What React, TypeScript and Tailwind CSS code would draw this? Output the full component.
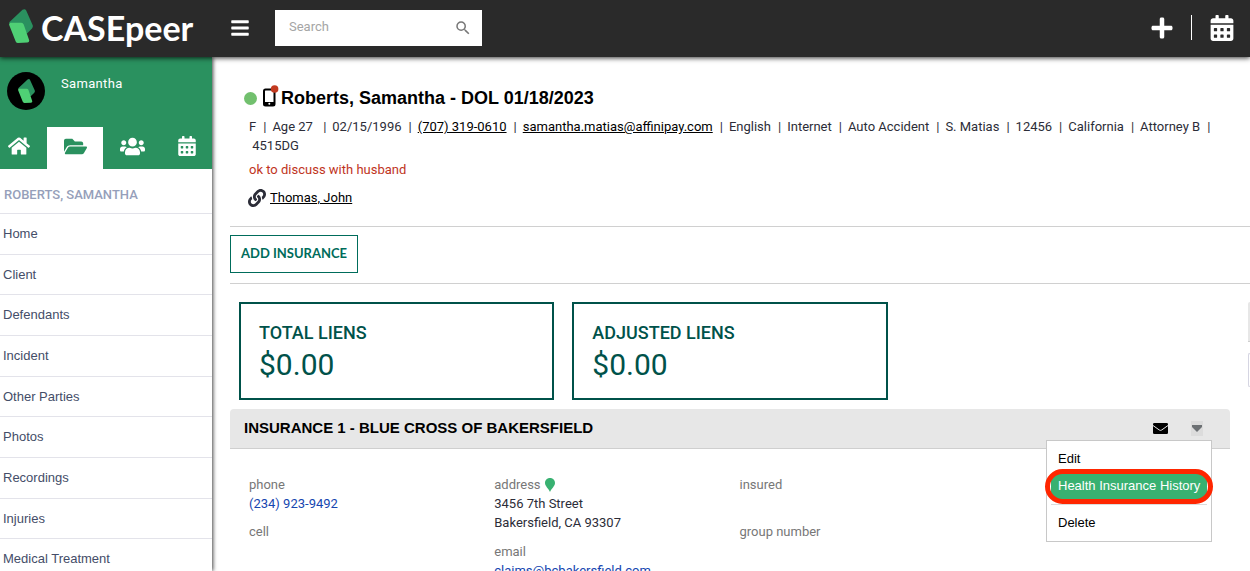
import React from "react";
import { FaBars, FaCalendarAlt, FaFolderOpen, FaHome, FaLink, FaPlus, FaUsers } from "react-icons/fa";
import { MdSearch } from "react-icons/md";

const navLinks = [
  "Home",
  "Client",
  "Defendants",
  "Incident",
  "Other Parties",
  "Photos",
  "Recordings",
  "Injuries",
  "Medical Treatment",
];

const details = [
  { text: "F" },
  { text: "Age 27 " },
  { text: "02/15/1996" },
  { text: "(707) 319-0610", href: "tel:7073190610" },
  { text: "samantha.matias@affinipay.com", href: "mailto:samantha.matias@affinipay.com" },
  { text: "English" },
  { text: "Internet" },
  { text: "Auto Accident" },
  { text: "S. Matias" },
  { text: "12456" },
  { text: "California" },
  { text: "Attorney B" },
  { text: " 4515DG" },
];

const totals = [
  { label: "TOTAL LIENS", value: "$0.00" },
  { label: "ADJUSTED LIENS", value: "$0.00" },
];

const LogoMark = ({ className }: { className: string }) => (
  <svg viewBox="0 0 24 34" className={className} aria-hidden="true">
    <path d="M0 13.5 13.5.8q2.500-1.600 3.700.8l6.400 14.500q.8 1.800-.6 3.300L18 24.500z" fill="#2a915f" />
    <path d="M1.500 13.800h10.800q1.700 0 2.400 1.600l5.400 15.600q.5 2.400-1.700 2.500l-9.400.4q-1.600 0-2.300-1.500L.3 16.300q-.7-2.200 1.200-2.500z" fill="#4fd075" />
  </svg>
);

const Header = () => (
  <header className="relative z-20 flex h-[57px] shrink-0 items-center bg-[#2a2a2a] pb-0.5 text-white shadow-[0_1px_5px_rgba(0,0,0,0.8)]">
    <a href="#" className="flex w-[231px] shrink-0 items-center pl-[9px]">
      <LogoMark className="mb-1 h-[34px] w-6" />
      <span className="ml-2 font-['Lato',sans-serif] text-[34px] leading-9 font-bold">CASEpeer</span>
    </a>
    <button type="button" aria-label="Toggle menu">
      <FaBars className="h-5 w-[18px]" />
    </button>
    <label className="ml-[26px] flex h-9 w-[207px] items-center bg-white pr-2.5 pl-3.5 text-[#777]">
      <input
        type="text"
        placeholder="Search"
        aria-label="Search"
        className="min-w-0 flex-1 pb-0.5 text-[13px] outline-none placeholder:text-[#a5a5a5]"
      />
      <MdSearch className="size-[18px]" />
    </label>
    <div className="ml-auto flex items-center pr-4">
      <button type="button" aria-label="Add">
        <FaPlus className="size-6" />
      </button>
      <span className="ml-[17px] h-[25px] w-px bg-white" />
      <button type="button" aria-label="Calendar" className="ml-[18px]">
        <FaCalendarAlt className="h-[26px] w-6" />
      </button>
    </div>
  </header>
);

const Sidebar = () => (
  <aside className="relative z-10 w-[212px] shrink-0 bg-white shadow-[1px_0_4px_rgba(0,0,0,0.75)]">
    <div className="bg-[#2a915f] text-white">
      <div className="flex h-[70px] items-start px-[7px] pt-[15px]">
        <span className="flex size-[38px] items-center justify-center rounded-full bg-black">
          <LogoMark className="h-6 w-[17px]" />
        </span>
        <span className="ml-4 pt-1 text-[13px] leading-4 tracking-wide">Samantha</span>
      </div>
      <div className="flex h-[42px] items-stretch">
        <button type="button" aria-label="Home" className="flex w-[47px] items-center pb-1 pl-2">
          <FaHome className="size-[22px]" />
        </button>
        <button
          type="button"
          aria-label="Cases"
          className="flex w-14 items-center justify-center bg-white pb-1 text-[#2a915f]"
        >
          <FaFolderOpen className="size-[23px]" />
        </button>
        <button type="button" aria-label="Contacts" className="flex w-[58px] items-center justify-center pb-1">
          <FaUsers className="size-[25px]" />
        </button>
        <button type="button" aria-label="Calendar" className="flex flex-1 items-center justify-center pb-1">
          <FaCalendarAlt className="h-5 w-[18px]" />
        </button>
      </div>
    </div>
    <h2 className="flex h-[45px] items-center border-b border-[#e3e3ea] pt-2 pl-1 text-[13px] font-medium text-[#969fba]">
      ROBERTS, SAMANTHA
    </h2>
    <ul className="flex min-h-[366px] flex-col font-['Liberation_Sans',Arial,sans-serif] text-[13px] text-[#444d68]">
      {navLinks.map((link) => (
        <li key={link} className="flex flex-1 border-b border-[#e3e3ea]">
          <a href="#" className="flex flex-1 items-center pl-[3px]">
            {link}
          </a>
        </li>
      ))}
    </ul>
  </aside>
);

const CaseSummary = () => (
  <section className="border-b border-[#d0d0d0] pt-[30px] pb-[18px] pl-3.5">
    <div className="flex h-[22px] items-center">
      <span className="size-[13px] rounded-full bg-[#72c06e]" />
      <svg viewBox="0 0 16 22" className="mb-1 ml-1.5 h-[22px] w-4" aria-hidden="true">
        <rect x="1" y="4.5" width="10.5" height="16" rx="1.5" fill="none" stroke="#000" strokeWidth="2" />
        <path d="M1 17h11v3.500H1z" />
        <circle cx="6.3" cy="18.7" r="1" fill="#fff" />
        <circle cx="11.6" cy="4" r="3.8" fill="#c23a20" />
      </svg>
      <h1 className="ml-0.5 font-['Liberation_Sans',Arial,sans-serif] text-lg leading-5 font-bold text-black">
        Roberts, Samantha - DOL 01/18/2023
      </h1>
    </div>
    <ul className="mt-2 flex flex-wrap pr-6 pl-[5px] leading-[19px]">
      {details.map((item, i) => (
        <li key={item.text} className="whitespace-pre">
          {item.href ? (
            <a href={item.href} className="text-black underline">
              {item.text}
            </a>
          ) : (
            item.text
          )}
          {i < details.length - 1 && <span className="pr-1.5 pl-[7px]">|</span>}
        </li>
      ))}
    </ul>
    <p className="mt-[5px] pl-[5px] leading-[19px] text-[#c0341d]">ok to discuss with husband</p>
    <p className="mt-[9px] flex items-center gap-1 pl-1 leading-5">
      <FaLink className="size-[18px]" />
      <a href="#" className="text-black underline">
        Thomas, John
      </a>
    </p>
  </section>
);

const ActionsMenu = () => (
  <div className="absolute top-[31px] right-[18px] z-10 w-[166px] border border-[#c8c8c8] bg-white px-1 pb-[5px] font-['Liberation_Sans',Arial,sans-serif] text-[13px] text-black">
    <button type="button" className="block h-[33px] w-full px-[7px] pt-0.5 text-left">
      Edit
    </button>
    <div className="relative">
      <button
        type="button"
        className="block h-[25px] w-full bg-[#38b171] px-[7px] pb-0.5 text-left whitespace-nowrap text-white"
      >
        Health Insurance History
      </button>
      <span className="pointer-events-none absolute -inset-x-1.5 -inset-y-[5px] rounded-full border-[5px] border-[#ff2600]" />
    </div>
    <hr className="mt-[5px] border-[#dcdcdc]" />
    <button type="button" className="block h-[31px] w-full px-[7px] pt-1 text-left">
      Delete
    </button>
  </div>
);

const InsurancePanel = () => (
  <section className="mt-[9px]">
    <div className="relative flex h-10 items-center rounded-t-sm border-b border-[#cfcfcf] bg-[#e7e7e7] pr-[27px] pl-3.5">
      <h2 className="font-['Liberation_Sans',Arial,sans-serif] text-[15px] font-bold text-black">
        INSURANCE 1 - BLUE CROSS OF BAKERSFIELD
      </h2>
      <button type="button" aria-label="Send email" className="ml-auto">
        <svg viewBox="0 0 15 11" className="h-[11px] w-[15px]">
          <rect width="15" height="11" rx="1.3" />
          <path d="M0 2.5 6.300 7q1.200.8 2.400 0L15 2.500" fill="none" stroke="#e7e7e7" />
        </svg>
      </button>
      <button type="button" aria-label="Actions" className="ml-[23px] bg-[#dcdcdc]">
        <svg viewBox="0 0 12 15" className="h-[15px] w-3">
          <path d="M1 4h10v2l-5 5-5-5z" fill="#6d7174" />
        </svg>
      </button>
      <ActionsMenu />
    </div>
    <div className="grid grid-cols-4 pt-[26px] pl-[19px] leading-[19px]">
      <dl>
        <dt className="text-[#777]">phone</dt>
        <dd>
          <a href="tel:2349239492" className="text-[#1546b0]">
            (234) 923-9492
          </a>
        </dd>
        <dt className="mt-[9px] text-[#777]">cell</dt>
      </dl>
      <dl>
        <dt className="flex items-center gap-1 text-[#777]">
          address
          <svg viewBox="0 0 10 14" className="h-3.5 w-2.5" aria-hidden="true">
            <path d="M5 0c3 0 5 2.200 5 5 0 3.300-3.600 5.500-5 9C3.600 10.500 0 8.300 0 5c0-2.800 2-5 5-5z" fill="#38b171" />
          </svg>
        </dt>
        <dd>
          3456 7th Street
          <br />
          Bakersfield, CA 93307
        </dd>
        <dt className="mt-2.5 text-[#777]">email</dt>
        <dd>
          <a href="mailto:claims@bcbakersfield.com" className="text-[#1546b0]">
            claims@bcbakersfield.com
          </a>
        </dd>
      </dl>
      <dl>
        <dt className="text-[#777]">insured</dt>
        <dd className="h-[19px]" />
        <dt className="mt-[9px] text-[#777]">group number</dt>
      </dl>
    </div>
  </section>
);

const App = () => {
  return (
    <div className="flex h-screen flex-col overflow-hidden bg-white font-['Roboto',sans-serif] text-[13px] text-[#2c2d38]">
      <Header />
      <div className="flex min-h-0 flex-1">
        <Sidebar />
        <main className="min-w-0 flex-1 pl-[18px]">
          <CaseSummary />
          <div className="border-b border-[#d0d0d0] pt-2 pb-2.5">
            <button
              type="button"
              className="h-[38px] border border-[#006c5b] px-2.5 font-['Lato',sans-serif] text-[13px] font-bold text-[#006c5b]"
            >
              ADD INSURANCE
            </button>
          </div>
          <div className="flex gap-[18px] pt-[18px]">
            <div className="min-w-0 flex-1">
              <div className="grid grid-cols-3 gap-[18px] px-[9px]">
                {totals.map((total) => (
                  <div
                    key={total.label}
                    className="h-[98px] border-2 border-[#00524a] px-[18px] pt-[17px] text-[#00524a]"
                  >
                    <h3 className="text-lg leading-6 font-medium">{total.label}</h3>
                    <p className="text-[30px] leading-10">{total.value}</p>
                  </div>
                ))}
              </div>
              <InsurancePanel />
            </div>
            <aside className="w-0.5">
              <div className="h-10 rounded-tl-sm border-b border-[#cfcfcf] bg-[#e7e7e7]" />
              <div className="mt-[11px] h-[34px] rounded-l-sm border-y border-l border-[#d5d5e2]" />
            </aside>
          </div>
        </main>
      </div>
    </div>
  );
};

export default App;
